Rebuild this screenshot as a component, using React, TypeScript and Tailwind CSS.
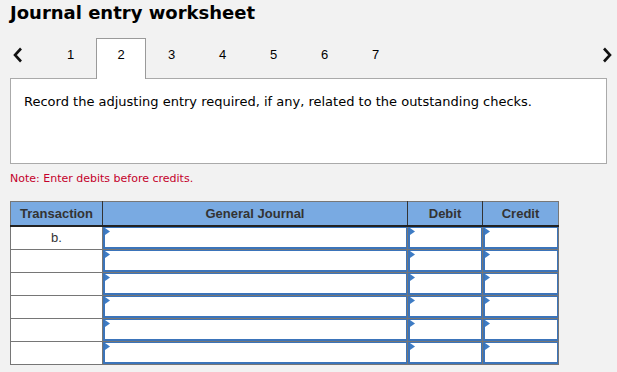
import { ReactNode } from 'react';

const tabs = [1, 2, 3, 4, 5, 6, 7];
const rows = ['b.', '', '', '', '', ''];

function Marker() {
    return (
        <svg className="absolute left-0 top-0" width="5" height="7" viewBox="0 0 5 7">
            <polygon points="0,0 5,3.5 0,7" fill="#3e7cc4" />
        </svg>
    );
}

function EntryCell({ width }: { width: string }) {
    return (
        <td className={`${width} h-[23px] p-0 border border-[#767676] bg-white`}>
            <div className="relative h-[22px] border-l-2 border-b-2 border-t border-r border-[#3b74ba] bg-white">
                <Marker />
            </div>
        </td>
    );
}

function HeadCell({ children, className }: { children: ReactNode; className: string }) {
    return (
        <th className={`${className} h-[24px] p-0 bg-[#79aae2] text-[13px] font-bold text-[#333] font-['Arial','Liberation_Sans',sans-serif] border-y border-y-[#777] border-x border-x-[#333] border-b-[#222] border-b-2`}>
            {children}
        </th>
    );
}

export default function App() {
    return (
        <div className="w-[617px] h-[372px] overflow-hidden bg-[#f2f2f2] text-black font-['Verdana','DejaVu_Sans',sans-serif]">
            <h1 className="pl-[10px] pt-[1px] h-[38px] text-[18px] leading-[24px] font-bold">Journal entry worksheet</h1>

            <div className="flex items-end h-[40px] relative z-10">
                <div className="w-[45px] h-[40px] flex items-start pt-[9px] pl-[13px]">
                    <svg width="10" height="16" viewBox="0 0 10 16">
                        <polyline points="8,1.5 2,8 8,14.5" fill="none" stroke="#111" strokeWidth="2.6" />
                    </svg>
                </div>
                {tabs.map((t) => (
                    <div
                        key={t}
                        className={
                            t === 2
                                ? 'w-[50px] h-[41px] -mb-[1px] bg-white border border-b-0 border-[#9a9a9a] flex justify-center pt-[8px] text-[13px] leading-[15px] font-[\'Arial\',\'Liberation_Sans\',sans-serif]'
                                : 'w-[51px] h-[40px] flex justify-center pt-[9px] text-[13px] leading-[15px] font-[\'Arial\',\'Liberation_Sans\',sans-serif]'
                        }
                    >
                        {t}
                    </div>
                ))}
                <div className="flex-1 h-[40px] flex items-start justify-end pt-[9px] pr-[5px]">
                    <svg width="10" height="16" viewBox="0 0 10 16">
                        <polyline points="2,1.5 8,8 2,14.5" fill="none" stroke="#111" strokeWidth="2.6" />
                    </svg>
                </div>
            </div>

            <div className="ml-[10px] w-[597px] h-[86px] bg-white border border-[#aaa] pl-[13px] pt-[14px] text-[13px] leading-[18px]">
                Record the adjusting entry required, if any, related to the outstanding checks.
            </div>

            <p className="pl-[10px] pt-[8px] h-[37px] text-[11px] leading-[14px] text-[#c4002b]">
                Note: Enter debits before credits.
            </p>

            <table className="ml-[10px] border-collapse table-fixed w-[548px]">
                <thead>
                    <tr>
                        <HeadCell className="w-[92px] border-l-[#777]">Transaction</HeadCell>
                        <HeadCell className="w-[305px]">General Journal</HeadCell>
                        <HeadCell className="w-[75px]">Debit</HeadCell>
                        <HeadCell className="w-[76px] border-r-[#777]">Credit</HeadCell>
                    </tr>
                </thead>
                <tbody>
                    {rows.map((r, i) => (
                        <tr key={i}>
                            <td className="w-[92px] h-[23px] p-0 border border-[#767676] bg-white text-center text-[13px] text-[#333] font-['Arial','Liberation_Sans',sans-serif] align-middle">
                                {r}
                            </td>
                            <EntryCell width="w-[305px]" />
                            <EntryCell width="w-[75px]" />
                            <EntryCell width="w-[76px]" />
                        </tr>
                    ))}
                </tbody>
            </table>
        </div>
    );
}
